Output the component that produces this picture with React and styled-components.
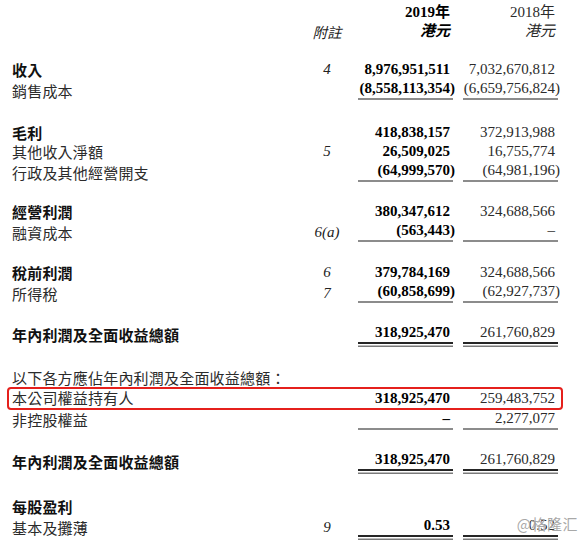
import React from 'react'
import styled, { createGlobalStyle } from 'styled-components'

const SERIF = `"Liberation Serif", "Noto Sans CJK TC", serif`
const CJK = `"Noto Sans CJK TC", "Noto Sans CJK SC", sans-serif`

const GlobalStyle = createGlobalStyle`
	html, body {
		margin: 0;
		padding: 0;
		background: #fff;
	}
	body {
		font-family: ${SERIF};
		color: #1c1c1c;
	}
`

const rows = [
	{ gap: 19, items: [
		{ label: '收入', bold: true, note: '4', a: '8,976,951,511', b: '7,032,670,812' },
		{ label: '銷售成本', a: '(8,558,113,354)', b: '(6,659,756,824)', rule: 'single' },
	]},
	{ gap: 23, items: [
		{ label: '毛利', bold: true, a: '418,838,157', b: '372,913,988' },
		{ label: '其他收入淨額', note: '5', a: '26,509,025', b: '16,755,774' },
		{ label: '行政及其他經營開支', a: '(64,999,570)', b: '(64,981,196)', rule: 'single' },
	]},
	{ gap: 20, items: [
		{ label: '經營利潤', bold: true, a: '380,347,612', b: '324,688,566' },
		{ label: '融資成本', note: '6(a)', a: '(563,443)', b: '–', rule: 'single' },
	]},
	{ gap: 21, items: [
		{ label: '稅前利潤', bold: true, note: '6', a: '379,784,169', b: '324,688,566' },
		{ label: '所得稅', note: '7', a: '(60,858,699)', b: '(62,927,737)', rule: 'single' },
	]},
	{ gap: 20, items: [
		{ label: '年內利潤及全面收益總額', bold: true, a: '318,925,470', b: '261,760,829', rule: 'double' },
	]},
	{ gap: 24, tall: true, items: [
		{ label: '以下各方應佔年內利潤及全面收益總額：' },
		{ label: '本公司權益持有人', a: '318,925,470', b: '259,483,752', highlight: true },
		{ label: '非控股權益', a: '–', b: '2,277,077', rule: 'single' },
	]},
	{ gap: 20, items: [
		{ label: '年內利潤及全面收益總額', bold: true, a: '318,925,470', b: '261,760,829', rule: 'double' },
	]},
	{ gap: 26, items: [
		{ label: '每股盈利', bold: true },
		{ label: '基本及攤薄', note: '9', a: '0.53', b: '0.52', rule: 'double' },
	]},
]

// numbers in brackets keep their digits aligned, the ")" hangs out
const Amount = ({ value, ...rest }) => {
	if (!value) return <AmountCell {...rest} />
	const neg = value.startsWith('(')
	return (
		<AmountCell {...rest}>
			{neg ? value.slice(0, -1) : value}
			{neg && <Close>)</Close>}
		</AmountCell>
	)
}

const App = () => {
	return (
		<Page>
			<GlobalStyle />
			<Header>
				<Row>
					<span />
					<span />
					<YearCell $bold>2019年</YearCell>
					<YearCell>2018年</YearCell>
				</Row>
				<Row>
					<span />
					<NoteHead>附註</NoteHead>
					<YearCell $bold $italic>港元</YearCell>
					<YearCell $italic>港元</YearCell>
				</Row>
			</Header>
			{rows.map((sec, i) => (
				<Section key={i} $gap={sec.gap} $tall={sec.tall}>
					{sec.items.map((r, j) => (
						<Row key={j} $highlight={r.highlight}>
							<Label $bold={r.bold}>{r.label}</Label>
							<Note>{r.note}</Note>
							<Amount value={r.a} $bold $rule={r.rule} />
							<Amount value={r.b} $rule={r.rule} />
						</Row>
					))}
				</Section>
			))}
			<Watermark>@格隆汇</Watermark>
		</Page>
	)
}

const Page = styled.div`
	position: relative;
	min-height: 544px;
	padding: 3px 0 0 12px;
	box-sizing: border-box;
	font-size: 15px;
`

const Header = styled.div`
	line-height: 19px;
`

const Section = styled.div`
	margin-top: ${p => p.$gap}px;
	line-height: ${p => (p.$tall ? 20 : 19)}px;
`

const Row = styled.div`
	position: relative;
	width: 546px;
	display: grid;
	grid-template-columns: 291px 48px 102px 105px;
	align-items: end;

	${p => p.$highlight && `
		&::after {
			content: '';
			position: absolute;
			left: -5px;
			right: -5px;
			top: -1px;
			bottom: -2px;
			border: 2.5px solid #e5201c;
			border-radius: 4px;
			pointer-events: none;
		}
	`}
`

const Label = styled.div`
	font-family: ${CJK};
	font-size: 15px;
	font-weight: ${p => (p.$bold ? 700 : 400)};
	letter-spacing: 0.2px;
	color: ${p => (p.$bold ? '#111' : '#2b2b2b')};
	white-space: nowrap;
`

const Note = styled.div`
	font-family: ${SERIF};
	font-style: italic;
	text-align: center;
	color: #222;
`

const NoteHead = styled(Note)`
	font-family: ${CJK};
	font-size: 14.5px;
`

const YearCell = styled.div`
	justify-self: end;
	width: 95px;
	padding-right: 3px;
	box-sizing: border-box;
	text-align: right;
	font-weight: ${p => (p.$bold ? 700 : 400)};
	font-style: ${p => (p.$italic ? 'italic' : 'normal')};
	color: ${p => (p.$bold ? '#000' : '#2b2b2b')};
	white-space: nowrap;
`

const AmountCell = styled.div`
	justify-self: end;
	width: 95px;
	padding-right: 3px;
	box-sizing: border-box;
	text-align: right;
	font-family: ${SERIF};
	font-weight: ${p => (p.$bold ? 700 : 400)};
	color: ${p => (p.$bold ? '#000' : '#2b2b2b')};
	white-space: nowrap;

	${p => p.$rule === 'single' && `
		border-bottom: 2px solid #8c8c8c;
	`}
	${p => p.$rule === 'double' && `
		border-bottom: 2px solid #262626;
		box-shadow: 0 1.5px 0 0 #fff, 0 3px 0 0 #7a7a7a;
	`}
`

const Close = styled.span`
	margin-right: -0.33em;
`

const Watermark = styled.div`
	position: absolute;
	right: 6px;
	bottom: 10px;
	font-family: ${CJK};
	font-size: 15px;
	color: rgba(140, 140, 140, 0.75);
	text-shadow: 0 0 1px #fff;
	letter-spacing: 0.5px;
`

export default App
